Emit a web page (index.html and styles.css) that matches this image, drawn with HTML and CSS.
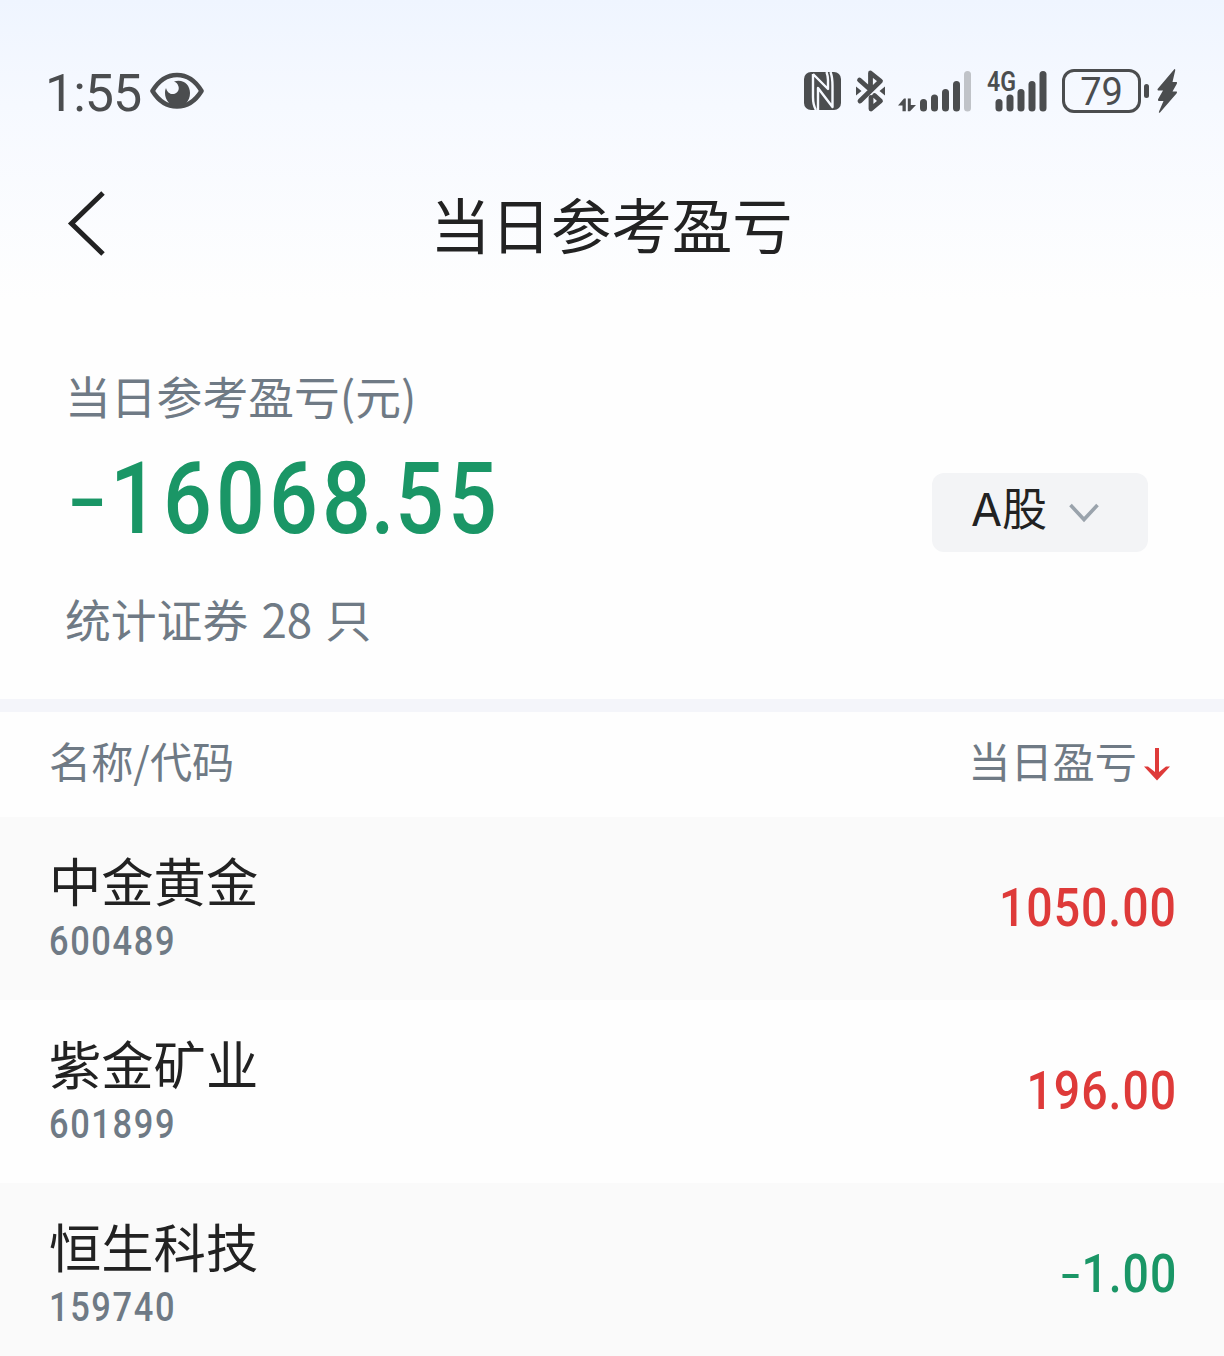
FILE: index.html
```html
<!DOCTYPE html>
<html lang="zh-CN">
	<head>
		<meta charset="utf-8">
		<title>当日参考盈亏</title>
		<link rel="stylesheet" href="styles.css">
	</head>
	<body>
		<!-- 顶部渐变区域 -->
		<div class="top">
			<!-- 状态栏 -->
			<div class="status">
				<span class="time">1:55</span>
				<svg class="eye" width="54" height="38" viewBox="0 0 54 38">
					<path d="M2.500 19C9 8 17 3 27 3s18 5 24.500 16C45 29.500 37 34.500 27 34.500S9 29.500 2.500 19z" fill="none" stroke="#4b4d4f" stroke-width="4.600" stroke-linejoin="round"/>
					<path d="M24 9.500C33 6.500 40 12.500 40 21c0 8-5.500 13.500-12.500 13.500S15 28.500 15 21c0-2 .3-3.500 1-5 1 4 4 6.500 7.500 6 4-.6 6-4 5-7.500-.6-2.500-2.300-4.200-4.500-5z" fill="#4b4d4f"/>
				</svg>
				<div class="status-right">
					<svg class="nfc" width="38" height="38" viewBox="0 0 38 38">
						<rect width="37" height="38" rx="7" fill="#4b4d4f"/>
						<g fill="none" stroke="#f6f9ff" stroke-linejoin="round">
							<path d="M9 2V25Q9 33 12 38M9 2L24 17V8Q24 4 22.500 0" stroke-width="2.400"/>
							<path d="M14 38V16L28.500 35V14Q28.500 5 26.500 0" stroke-width="2.400"/>
						</g>
					</svg>
					<svg class="bluetooth" width="30" height="42" viewBox="0 0 30 42">
						<g fill="none" stroke="#4b4d4f" stroke-width="4.800" stroke-linejoin="round" stroke-linecap="round">
							<path d="M3.500 10L12.500 18M14.500 17V3L24.500 11L4 31"/>
							<path d="M15 27.500V39L24.500 31L18.500 25.500"/>
						</g>
						<path d="M0 16.500l5.500 4.500-5.500 4.500zM29 16.500l-5.500 4.500 5.500 4.500z" fill="#4b4d4f"/>
					</svg>
					<svg class="signal" width="73" height="42" viewBox="0 0 73 42">
						<path d="M0 35.500L6 28.500h1.800v12.800H4.500v-5.800zM9.800 28.500h3v6.500h5.200L12 41.300h-2.200z" fill="#4b4d4f"/>
						<g fill="#4b4d4f">
							<rect x="22" y="29" width="7" height="12.500" rx="3.500"/>
							<rect x="33" y="24.500" width="7" height="17" rx="3.500"/>
							<rect x="44" y="19" width="7" height="22.500" rx="3.500"/>
							<rect x="55" y="11" width="7" height="30.500" rx="3.500"/>
							<rect x="66" y="1" width="7" height="40.500" rx="3.500" fill="#c0c3c8"/>
						</g>
					</svg>
					<svg class="signal4g" width="60" height="42" viewBox="0 0 60 42">
						<text class="net" x="0" y="20.500" textLength="29" lengthAdjust="spacingAndGlyphs">4G</text>
						<g fill="#4b4d4f">
							<rect x="8.500" y="29" width="7" height="12.500" rx="3.500"/>
							<rect x="19.500" y="24.500" width="7" height="17" rx="3.500"/>
							<rect x="30.500" y="19" width="7" height="22.500" rx="3.500"/>
							<rect x="41.500" y="11" width="7" height="30.500" rx="3.500"/>
							<rect x="52.500" y="1" width="7" height="40.500" rx="3.500"/>
						</g>
					</svg>
					<div class="battery">79</div>
					<div class="battery-tip"></div>
					<svg class="bolt" width="22" height="44" viewBox="0 0 22 44">
						<path d="M17.500 0Q18.500 0 18.200 1.500L15.500 13H19.500Q20.500 13.500 19.700 15L15.500 22.500H19.500Q20.500 23 19.500 24.500L3 43.500Q1.500 44.500 2 42.500L6.500 32H1.500Q.5 31 1.200 30L6 21.500H1Q0 20.500 1 19.500z" fill="#4b4d4f"/>
					</svg>
				</div>
			</div>
			<!-- 标题栏 -->
			<div class="nav">
				<svg class="back" width="40" height="66" viewBox="0 0 40 66">
					<path d="M36 3L4.500 33.500L36 64" fill="none" stroke="#222" stroke-width="5"/>
				</svg>
				<h1 class="title">当日参考盈亏</h1>
			</div>
		</div>
		<!-- 盈亏汇总 -->
		<div class="summary">
			<div class="summary-left">
				<div class="label">当日参考盈亏(元)</div>
				<div class="total"><span class="minus">-</span>16068<span class="dot">.</span>55</div>
				<div class="label count">统计证券 28 只</div>
			</div>
			<div class="market">
				<span class="market-name">A股</span>
				<svg width="30" height="20" viewBox="0 0 30 20">
					<path d="M1.500 2L15 16.500L28.500 2" fill="none" stroke="#9aa3ac" stroke-width="3.600"/>
				</svg>
			</div>
		</div>
		<!-- 列表 -->
		<div class="list-head">
			<span>名称/代码</span>
			<span class="sort">当日盈亏
				<svg class="arrow" width="26" height="34" viewBox="0 0 26 34">
					<path d="M11 1h4v24l7-5.500h4L13 33.500 0 19.500h4l7 5.500z" fill="#de3a39"/>
				</svg>
			</span>
		</div>
		<ul class="list">
			<li>
				<div><div class="name">中金黄金</div><div class="code">600489</div></div>
				<div class="value up">1050.00</div>
			</li>
			<li>
				<div><div class="name">紫金矿业</div><div class="code">601899</div></div>
				<div class="value up">196.00</div>
			</li>
			<li>
				<div><div class="name">恒生科技</div><div class="code">159740</div></div>
				<div class="value down"><span class="minus">-</span>1.00</div>
			</li>
		</ul>
	</body>
</html>
```
FILE: styles.css
```css
*{
	margin: 0;
	padding: 0;
	box-sizing: border-box;
}

body{
	height: 1356px;
	overflow: hidden;
	background-color: #fefefe;
	color: #222;
	font-family: "Noto Sans CJK SC", sans-serif;
}
svg{
	display: block;
	flex-shrink: 0;
}

/* 顶部渐变 */
.top{
	height: 300px;
	background: linear-gradient(#eff5ff, #f6f9ff 35%, #fefefe);
}
/* 状态栏 */
.status{
	display: flex;
	align-items: center;
	height: 182px;
	padding: 0 45px;
	color: #4b4d4f;
	font-family: Roboto, sans-serif;
}
.time{
	width: 105px;
	font-size: 52px;
	letter-spacing: -1px;
	padding-top: 4px;
}
.status-right{
	display: flex;
	align-items: center;
	margin-left: auto;
}
.bluetooth{
	margin-left: 14px;
}
.signal{
	margin-left: 12px;
}
.signal4g{
	margin-left: 16px;
	overflow: visible;
}
.net{
	font-size: 28px;
	font-weight: 600;
	fill: #4b4d4f;
}
.battery{
	width: 79px;
	height: 44px;
	margin-left: 15px;
	border: 3.5px solid #4b4d4f;
	border-radius: 12px;
	font-size: 38px;
	line-height: 40px;
	text-align: center;
}
.battery-tip{
	width: 5px;
	height: 14px;
	margin-left: 3px;
	border-radius: 3px;
	background-color: #4b4d4f;
}
.bolt{
	margin-left: 8px;
}

/* 标题栏 */
.nav{
	display: flex;
	align-items: center;
	height: 82px;
	padding: 0 67px;
}
.title{
	flex: 1;
	margin-right: 41px;
	font-size: 60.4px;
	font-weight: 400;
	line-height: 80px;
	text-align: center;
}

/* 汇总 */
.summary{
	display: flex;
	justify-content: space-between;
	height: 412px;
	padding: 65px 76px 0 65px;
	border-bottom: 13px solid #f4f5fa;
}
.label{
	font-size: 45.8px;
	line-height: 60px;
	color: #6f7a85;
}
/* 数字压窄一些，接近DIN字体 */
.total,
.code,
.value{
	font-family: Roboto, sans-serif;
	font-weight: 500;
	transform: scaleX(.86);
	transform-origin: left;
}
.total{
	height: 147px;
	font-size: 100px;
	line-height: 147px;
	letter-spacing: 4.8px;
	color: #1a9666;
}
.minus{
	display: inline-block;
	margin-left: .13em;
	margin-right: .07em;
	font-weight: 400;
	transform: scaleX(1.45);
}
.dot{
	margin-left: -.05em;
	margin-right: -.045em;
}
.count{
	margin-top: 16px;
	word-spacing: 3px;
}
.market{
	display: flex;
	align-items: center;
	gap: 22px;
	width: 216px;
	height: 79px;
	margin-top: 108px;
	padding-left: 39px;
	border-radius: 12px;
	background-color: #f3f4f6;
	font-family: Inter, "Noto Sans CJK SC", sans-serif;
	font-size: 45px;
}
.market-name{
	line-height: 70px;
	padding-bottom: 6px;
}

/* 列表 */
.list-head{
	display: flex;
	align-items: center;
	justify-content: space-between;
	height: 105px;
	padding: 0 54px 10px 49px;
	font-size: 42.2px;
	color: #6f7a85;
}
.sort{
	display: flex;
	align-items: center;
	gap: 7px;
}
.arrow{
	margin-top: 9px;
}
.list{
	list-style: none;
}
.list li{
	display: flex;
	align-items: center;
	justify-content: space-between;
	height: 183px;
	padding: 0 47px 0 49px;
}
.list li:nth-child(odd){
	background-color: #fafafa;
}
.name{
	margin-top: -4px;
	font-size: 52.3px;
	line-height: 66px;
}
.code{
	margin-top: 4px;
	font-size: 40px;
	line-height: 52px;
	letter-spacing: 1.9px;
	color: #6f7a85;
}
.value{
	padding-bottom: 2px;
	font-size: 54px;
	letter-spacing: 1.1px;
	transform-origin: right;
}
.up{
	color: #de3a39;
}
.down{
	color: #1a9666;
}
```
